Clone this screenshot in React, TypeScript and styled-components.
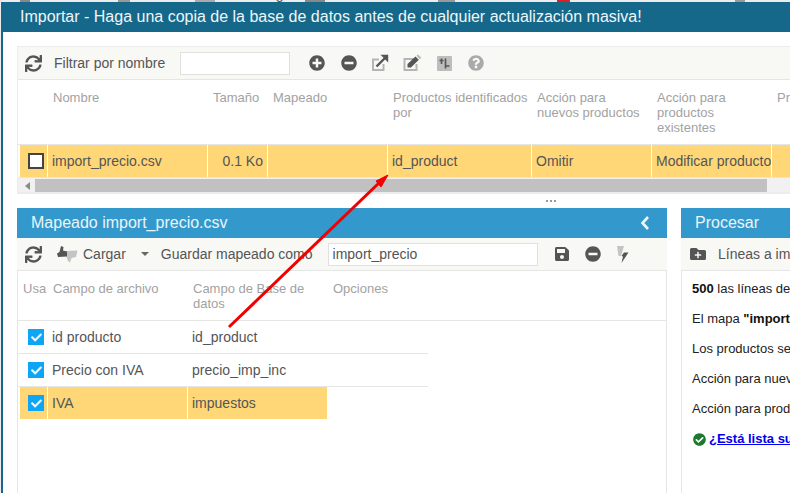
import React from "react";
import styled, { createGlobalStyle } from "styled-components";
import {
  FaSync,
  FaPlusCircle,
  FaMinusCircle,
  FaQuestionCircle,
  FaSave,
  FaFolderPlus,
  FaCheckCircle,
  FaCheck,
} from "react-icons/fa";

const Global = createGlobalStyle`
  html, body { margin: 0; padding: 0; background: #fff; }
  body { font-family: "Liberation Sans", Arial, sans-serif; color: #555; overflow: hidden; }
  * { box-sizing: border-box; }
`;

const Page = styled.div`
  width: 790px;
  height: 493px;
  overflow: hidden;
  position: relative;
  background: #ececec;
`;

const TopStrip = styled.div`
  height: 2px;
  overflow: hidden;
  display: flex;
  align-items: flex-end;
  font-size: 14px;
  line-height: 16px;
  white-space: nowrap;
`;

const TopItem = styled.div<{ $w: number }>`
  flex: none;
  width: ${(p) => p.$w}px;
  display: flex;
  justify-content: space-between;
  align-items: flex-end;
  height: 16px;
  color: #555;
`;

const TopGlyph = styled.span<{ $w: number; $mr: number; $color: string }>`
  flex: none;
  width: ${(p) => p.$w}px;
  height: 2px;
  margin-right: ${(p) => p.$mr}px;
  background: ${(p) => p.$color};
`;

const Dialog = styled.div`
  margin-left: 1px;
  height: 491px;
  border-left: 2px solid #15688a;
  background: #fff;
  display: flex;
  flex-direction: column;
`;

const TitleBar = styled.div`
  margin-left: -2px;
  height: 30px;
  flex: none;
  background: #15688a;
  color: #eef6fa;
  font-size: 16px;
  line-height: 29px;
  padding-left: 19px;
  white-space: nowrap;
`;

const Content = styled.div`
  flex: 1;
  min-height: 0;
  padding: 14px 0 0 14px;
  display: flex;
  flex-direction: column;
`;

const ImportPanel = styled.section`
  flex: none;
  margin-right: -6px;
  border: 1px solid #ececec;
  border-bottom: 2px solid #ececec;
  border-right: 0;
  overflow: hidden;
`;

const Toolbar = styled.div`
  height: 32px;
  background: #f8f8f5;
  display: flex;
  align-items: center;
  font-size: 14px;
  color: #555;
  white-space: nowrap;
  overflow: hidden;
`;

const Slot = styled.span<{ $left: number; $w: number; $color?: string }>`
  flex: none;
  margin-left: ${(p) => p.$left}px;
  width: ${(p) => p.$w}px;
  display: inline-flex;
  align-items: center;
  justify-content: center;
  color: ${(p) => p.$color ?? "#555"};
  svg { display: block; }
`;

const ToolLabel = styled.span<{ $left: number }>`
  flex: none;
  margin-left: ${(p) => p.$left}px;
`;

const TextBox = styled.input<{ $left: number; $w: number }>`
  flex: none;
  margin-left: ${(p) => p.$left}px;
  width: ${(p) => p.$w}px;
  height: 23px;
  border: 1px solid #e0e0e0;
  background: #fff;
  padding: 0 4px;
  font: 14px "Liberation Sans", Arial, sans-serif;
  color: #555;
  outline: none;
`;

const Columns = styled.div<{ $cols: string }>`
  display: grid;
  grid-template-columns: ${(p) => p.$cols};
  column-gap: 1px;
`;

const HeadRow = styled(Columns)<{ $h: number }>`
  height: ${(p) => p.$h}px;
  border-top: 1px solid #e6e6e6;
  border-bottom: 1px solid #e6e6e6;
  padding-left: 2px;
  background: #fff;
`;

const MapHeadRow = styled(HeadRow)`
  border-top: 0;
`;

const HeadCell = styled.div<{ $pad?: number }>`
  padding: 10px 0 0 ${(p) => p.$pad ?? 5}px;
  font-size: 13px;
  line-height: 15px;
  color: #a2a2a2;
  overflow: hidden;
`;

const DataRow = styled(Columns)`
  height: 33px;
  padding-left: 2px;
  border-bottom: 1px solid #e6e6e6;
`;

const MapRow = styled(DataRow)<{ $on?: boolean }>`
  width: 410px;
  border-bottom-color: ${(p) => (p.$on ? "transparent" : "#e6e6e6")};
`;

const DataCell = styled.div<{ $on?: boolean; $right?: boolean }>`
  background: ${(p) => (p.$on ? "#ffd777" : "transparent")};
  font-size: 14px;
  line-height: 32px;
  height: 32px;
  color: #555;
  padding: 0 4px;
  white-space: nowrap;
  overflow: hidden;
  text-align: ${(p) => (p.$right ? "right" : "left")};
  display: ${(p) => (p.$right ? "block" : "flex")};
  align-items: center;
`;

const CheckCell = styled(DataCell)`
  padding: 0 0 0 8px;
`;

const Check = styled.span<{ $checked?: boolean }>`
  width: 16px;
  height: 16px;
  display: inline-flex;
  align-items: center;
  justify-content: center;
  background: ${(p) => (p.$checked ? "#0ea5f5" : "#fff")};
  border: ${(p) => (p.$checked ? "0" : "2px solid #444")};
  color: #e8f6ff;
`;

const ScrollBar = styled.div`
  height: 14px;
  background: #f1f1f1;
  display: flex;
  align-items: flex-end;
  padding-left: 1px;
`;

const ScrollArrow = styled.span`
  flex: none;
  width: 16px;
  height: 13px;
  display: inline-flex;
  justify-content: center;
  align-items: center;
  &::before {
    content: "";
    border-style: solid;
    border-width: 4px 5px 4px 0;
    border-color: transparent #8a8a8a transparent transparent;
  }
`;

const ScrollThumb = styled.div`
  flex: none;
  width: 732px;
  height: 13px;
  background: #c1c1c1;
`;

const Resizer = styled.div`
  flex: none;
  height: 14px;
  display: flex;
  align-items: center;
  gap: 2px;
  padding-left: 529px;
  span { width: 2px; height: 2px; background: #999; }
`;

const Panels = styled.div`
  flex: 1;
  min-height: 0;
  display: flex;
  gap: 14px;
`;

const Panel = styled.section<{ $w: number }>`
  flex: none;
  width: ${(p) => p.$w}px;
  display: flex;
  flex-direction: column;
  min-height: 0;
`;

const PanelTitle = styled.div`
  height: 30px;
  flex: none;
  background: #3399cc;
  color: #e9f5fb;
  font-size: 16px;
  line-height: 30px;
  padding: 0 14px;
  display: flex;
  justify-content: space-between;
  align-items: center;
  white-space: nowrap;
`;

const PanelBody = styled.div`
  flex: 1;
  min-height: 0;
  border: 1px solid #e6e6e6;
  border-width: 1px 1px 0 1px;
  background: #fff;
  overflow: hidden;
`;

const ProcessLine = styled.div`
  height: 30px;
  padding-left: 10px;
  font-size: 13px;
  line-height: 30px;
  color: #222;
  white-space: nowrap;
  overflow: hidden;
  display: flex;
  align-items: center;
  gap: 3px;
  b { color: #111; }
`;

const ProcessList = styled.div`
  padding-top: 3px;
`;

const ReadyLink = styled.a`
  color: #0000ee;
  font-weight: bold;
  font-size: 13px;
  text-decoration: underline;
`;

const Arrow = styled.svg`
  position: absolute;
  left: 0;
  top: 0;
  pointer-events: none;
`;

const Caret = styled.span`
  flex: none;
  margin-left: 15px;
  border-style: solid;
  border-width: 4px 4px 0;
  border-color: #666 transparent transparent;
`;

const RefreshIcon = () => <FaSync size={17} />;

const ExportIcon = () => (
  <svg width="18" height="18" viewBox="0 0 18 18">
    <path d="M12.5 10V16H2V5.5H8" fill="none" stroke="#b5b5b5" strokeWidth="2" />
    <path d="M5.5 12.5L14 4" stroke="#555" strokeWidth="2.4" fill="none" />
    <path d="M9.5 .8H17.2V8.5Z" fill="#555" />
  </svg>
);

const EditIcon = () => (
  <svg width="19" height="18" viewBox="0 0 19 18">
    <path d="M12 5H1.5V16H13.5V10" fill="none" stroke="#b5b5b5" strokeWidth="2" />
    <path d="M4.5 13.5V10L12.5 2.6 15.8 5.8 8 13.5Z" fill="#555" />
    <path d="M13.5 1.7L14.9 .4 18.4 3.7 16.8 5Z" fill="#b5b5b5" />
  </svg>
);

const SplitIcon = () => (
  <svg width="15" height="15" viewBox="0 0 15 15">
    <rect width="15" height="15" rx="1" fill="#bdbdbd" />
    <path d="M2.5 4.5H6.5M4.5 2.5V8M8.5 10H12.5M8.5 2.5V12.5" stroke="#555" strokeWidth="1.6" fill="none" />
  </svg>
);

const BoltIcon = () => (
  <svg width="13" height="17" viewBox="0 0 13 17">
    <path d="M1 0H8L6.5 5 5 10H2.5Z" fill="#c4c4c4" />
    <path d="M8 6.5H12.5L5.5 17 7 10.5 5.5 10Z" fill="#555" />
  </svg>
);

const LoadIcon = () => (
  <svg width="21" height="17" viewBox="0 0 21 17">
    <path d="M9 5L20.5 4.5 19 11 14.5 12 13 16.5 11 15 9.5 11Z" fill="#c4c4c4" />
    <path d="M4 0L6.5 1 6 4.5 10 5.5 10 10.5 1 11 0 7.5 2.5 6Z" fill="#555" />
  </svg>
);

const ChevronIcon = () => (
  <svg width="10" height="16" viewBox="0 0 10 16">
    <path d="M8 2L2.5 8 8 14" fill="none" stroke="#eef7fb" strokeWidth="2.6" />
  </svg>
);

const fileCols = "27px 159px 59px 119px 143px 119px 119px 60px";
const mapCols = "27px 139px 139px 99px";

const tops: { w: number; t: string; gw: number; mr: number; c: string }[] = [
  { w: 40, t: "", gw: 10, mr: 10, c: "#888" },
  { w: 100, t: "Clientes", gw: 12, mr: 10, c: "#999" },
  { w: 82, t: "CMS", gw: 20, mr: 7, c: "#aaa" },
  { w: 111, t: "Marketing", gw: 20, mr: 8, c: "#888" },
  { w: 129, t: "Herramientas", gw: 17, mr: 7, c: "#999" },
  { w: 118, t: "Tendencias", gw: 13, mr: 10, c: "#e02020" },
  { w: 175, t: "Servicios electrónicos", gw: 10, mr: 10, c: "#999" },
  { w: 60, t: "Chat", gw: 0, mr: 0, c: "transparent" },
];

const mapRows: [string, string, boolean][] = [
  ["id producto", "id_product", false],
  ["Precio con IVA", "precio_imp_inc", false],
  ["IVA", "impuestos", true],
];

export default function App() {
  return (
    <Page>
      <Global />
      <TopStrip>
        {tops.map((item) => (
          <TopItem key={item.w} $w={item.w}>
            <span>{item.t}</span>
            <TopGlyph $w={item.gw} $mr={item.mr} $color={item.c} />
          </TopItem>
        ))}
      </TopStrip>
      <Dialog>
        <TitleBar>Importar - Haga una copia de la base de datos antes de cualquier actualización masiva!</TitleBar>
        <Content>
          <ImportPanel>
            <Toolbar>
              <Slot $left={6} $w={18}><RefreshIcon /></Slot>
              <ToolLabel $left={12}>Filtrar por nombre</ToolLabel>
              <TextBox $left={15} $w={110} />
              <Slot $left={18} $w={17}><FaPlusCircle size={16} /></Slot>
              <Slot $left={15} $w={17}><FaMinusCircle size={16} /></Slot>
              <Slot $left={14} $w={18}><ExportIcon /></Slot>
              <Slot $left={14} $w={19}><EditIcon /></Slot>
              <Slot $left={14} $w={17}><SplitIcon /></Slot>
              <Slot $left={14} $w={17} $color="#aaa"><FaQuestionCircle size={16} /></Slot>
            </Toolbar>
            <HeadRow $cols={fileCols} $h={66}>
              <HeadCell />
              <HeadCell>Nombre</HeadCell>
              <HeadCell>Tamaño</HeadCell>
              <HeadCell>Mapeado</HeadCell>
              <HeadCell>Productos identificados por</HeadCell>
              <HeadCell>Acción para nuevos productos</HeadCell>
              <HeadCell>Acción para productos existentes</HeadCell>
              <HeadCell>Productos</HeadCell>
            </HeadRow>
            <DataRow $cols={fileCols}>
              <CheckCell $on><Check /></CheckCell>
              <DataCell $on>import_precio.csv</DataCell>
              <DataCell $on $right>0.1 Ko</DataCell>
              <DataCell $on />
              <DataCell $on>id_product</DataCell>
              <DataCell $on>Omitir</DataCell>
              <DataCell $on>Modificar producto</DataCell>
              <DataCell $on />
            </DataRow>
            <ScrollBar>
              <ScrollArrow />
              <ScrollThumb />
            </ScrollBar>
          </ImportPanel>
          <Resizer>
            <span /><span /><span />
          </Resizer>
          <Panels>
            <Panel $w={650}>
              <PanelTitle>
                Mapeado import_precio.csv
                <Slot $left={0} $w={16}><ChevronIcon /></Slot>
              </PanelTitle>
              <Toolbar>
                <Slot $left={7} $w={18}><RefreshIcon /></Slot>
                <Slot $left={15} $w={21}><LoadIcon /></Slot>
                <ToolLabel $left={5}>Cargar</ToolLabel>
                <Caret />
                <ToolLabel $left={12}>Guardar mapeado como</ToolLabel>
                <TextBox $left={15} $w={210} defaultValue="import_precio" />
                <Slot $left={16} $w={17}><FaSave size={16} /></Slot>
                <Slot $left={14} $w={17}><FaMinusCircle size={16} /></Slot>
                <Slot $left={14} $w={14}><BoltIcon /></Slot>
              </Toolbar>
              <PanelBody>
                <MapHeadRow $cols={mapCols} $h={50}>
                  <HeadCell $pad={3}>Usa</HeadCell>
                  <HeadCell>Campo de archivo</HeadCell>
                  <HeadCell>Campo de Base de datos</HeadCell>
                  <HeadCell>Opciones</HeadCell>
                </MapHeadRow>
                {mapRows.map(([a, b, on]) => (
                  <MapRow key={a} $cols={mapCols} $on={on}>
                    <CheckCell $on={on}>
                      <Check $checked><FaCheck size={11} /></Check>
                    </CheckCell>
                    <DataCell $on={on}>{a}</DataCell>
                    <DataCell $on={on}>{b}</DataCell>
                    <DataCell />
                  </MapRow>
                ))}
              </PanelBody>
            </Panel>
            <Panel $w={300}>
              <PanelTitle>Procesar</PanelTitle>
              <Toolbar>
                <Slot $left={8} $w={17}><FaFolderPlus size={16} /></Slot>
                <ToolLabel $left={12}>Líneas a importar</ToolLabel>
              </Toolbar>
              <PanelBody>
                <ProcessList>
                  <ProcessLine><span><b>500</b> las líneas del archivo serán importadas</span></ProcessLine>
                  <ProcessLine><span>El mapa <b>"import_precio"</b> será utilizado</span></ProcessLine>
                  <ProcessLine>Los productos serán identificados por id_product</ProcessLine>
                  <ProcessLine>Acción para nuevos productos: Omitir</ProcessLine>
                  <ProcessLine>Acción para productos existentes: Modificar</ProcessLine>
                  <ProcessLine>
                    <Slot $left={0} $w={14} $color="#1a7a2e"><FaCheckCircle size={13} /></Slot>
                    <ReadyLink href="#">¿Está lista su importación?</ReadyLink>
                  </ProcessLine>
                </ProcessList>
              </PanelBody>
            </Panel>
          </Panels>
        </Content>
      </Dialog>
      <Arrow width="790" height="493" viewBox="0 0 790 493">
        <path d="M229 327L380 182" stroke="#f00000" strokeWidth="3" fill="none" />
        <path d="M388 175L376 181 381 187Z" fill="#f00000" stroke="#f00000" strokeWidth="1" />
      </Arrow>
    </Page>
  );
}
